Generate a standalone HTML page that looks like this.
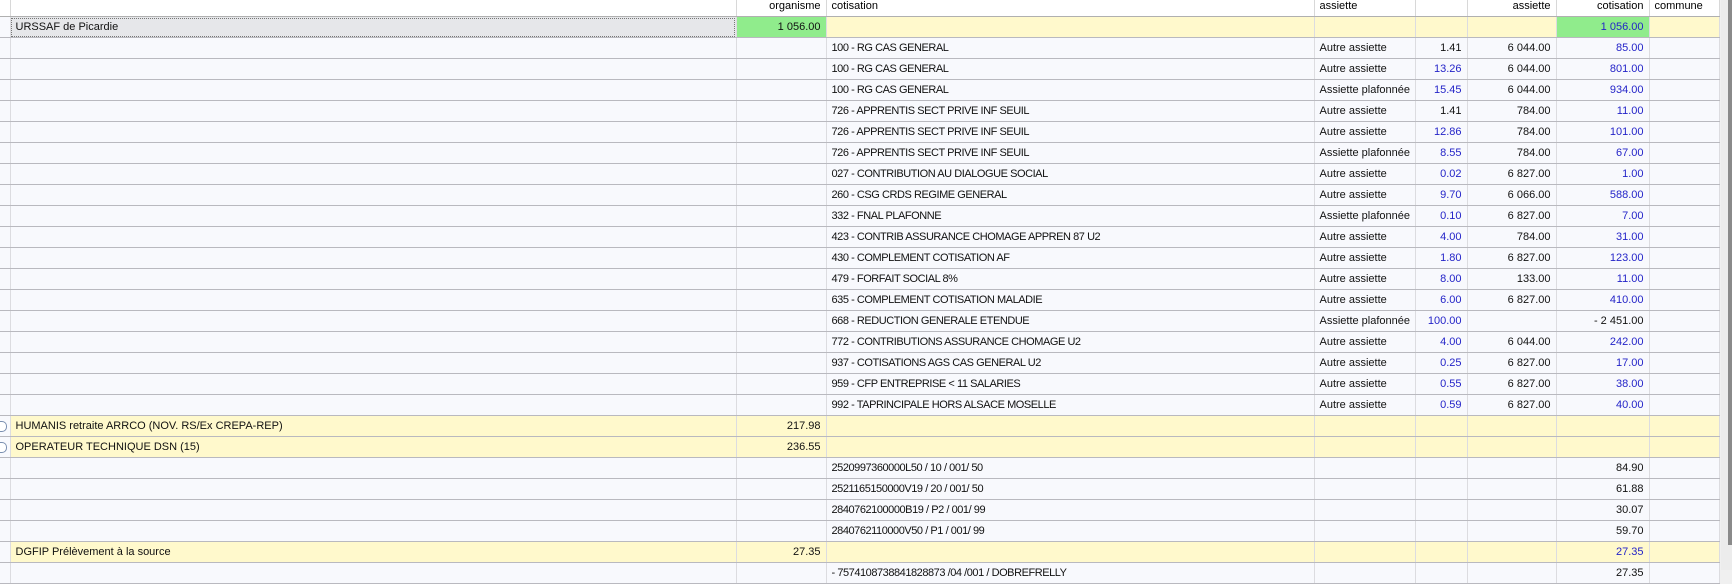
<!DOCTYPE html>
<html><head><meta charset="utf-8"><style>
body{margin:0;width:1732px;height:570px;overflow:hidden;background:#f0f0f0;font-family:"Liberation Sans",sans-serif;font-size:11px;color:#111;position:relative}
table{position:absolute;left:0;top:0;border-collapse:collapse;table-layout:fixed;width:1719px}
td{height:20px;padding:0 5px;border-bottom:1px solid #b9b9bf;border-right:1px solid #dcdce0;white-space:nowrap;overflow:hidden;background:#f8f9fd;line-height:20px;position:relative}
tr.h td{height:16px;line-height:13px;vertical-align:top;background:#fff;border-bottom:1px solid #b0b0b0;border-right:1px solid #d8d8d8;color:#000}
tr.y td{background:#fff9cc}
tr.y td.c0{background:#f8f9fd}
td.c0{padding:0}
td.k{letter-spacing:-0.45px}
.r{text-align:right}
.b{color:#2424c8}
td.g{background:#90ec8c!important}
td.u{background:#e6e7ea!important;outline:1px dotted #777;outline-offset:-2px}
.sb{position:absolute;left:1721px;top:0;width:11px;height:570px;background:#ececec}
.th{position:absolute;left:1728px;top:0;width:4px;height:545px;background:#8a8a8a}
.ic{position:absolute;left:0;top:5px;width:6px;height:9px;border:1px solid #7a8fb0;border-left:none;border-radius:0 5px 5px 0;background:#fff}
</style></head><body>
<table>
<colgroup><col style="width:10px"><col style="width:726px"><col style="width:90px"><col style="width:488px"><col style="width:101px"><col style="width:52px"><col style="width:89px"><col style="width:93px"><col style="width:70px"></colgroup>
<tr class="h"><td class="c0"></td><td></td><td class="r">organisme</td><td>cotisation</td><td>assiette</td><td></td><td class="r">assiette</td><td class="r">cotisation</td><td>commune</td></tr>
<tr class="y"><td class="c0"></td><td class="u">URSSAF de Picardie</td><td class="r g">1 056.00</td><td></td><td></td><td></td><td></td><td class="r g b">1 056.00</td><td></td></tr>
<tr><td class="c0"></td><td></td><td></td><td class="k">100 - RG CAS GENERAL</td><td>Autre assiette</td><td class="r">1.41</td><td class="r">6 044.00</td><td class="r b">85.00</td><td></td></tr>
<tr><td class="c0"></td><td></td><td></td><td class="k">100 - RG CAS GENERAL</td><td>Autre assiette</td><td class="r b">13.26</td><td class="r">6 044.00</td><td class="r b">801.00</td><td></td></tr>
<tr><td class="c0"></td><td></td><td></td><td class="k">100 - RG CAS GENERAL</td><td>Assiette plafonnée</td><td class="r b">15.45</td><td class="r">6 044.00</td><td class="r b">934.00</td><td></td></tr>
<tr><td class="c0"></td><td></td><td></td><td class="k">726 - APPRENTIS SECT PRIVE INF SEUIL</td><td>Autre assiette</td><td class="r">1.41</td><td class="r">784.00</td><td class="r b">11.00</td><td></td></tr>
<tr><td class="c0"></td><td></td><td></td><td class="k">726 - APPRENTIS SECT PRIVE INF SEUIL</td><td>Autre assiette</td><td class="r b">12.86</td><td class="r">784.00</td><td class="r b">101.00</td><td></td></tr>
<tr><td class="c0"></td><td></td><td></td><td class="k">726 - APPRENTIS SECT PRIVE INF SEUIL</td><td>Assiette plafonnée</td><td class="r b">8.55</td><td class="r">784.00</td><td class="r b">67.00</td><td></td></tr>
<tr><td class="c0"></td><td></td><td></td><td class="k">027 - CONTRIBUTION AU DIALOGUE SOCIAL</td><td>Autre assiette</td><td class="r b">0.02</td><td class="r">6 827.00</td><td class="r b">1.00</td><td></td></tr>
<tr><td class="c0"></td><td></td><td></td><td class="k">260 - CSG CRDS REGIME GENERAL</td><td>Autre assiette</td><td class="r b">9.70</td><td class="r">6 066.00</td><td class="r b">588.00</td><td></td></tr>
<tr><td class="c0"></td><td></td><td></td><td class="k">332 - FNAL PLAFONNE</td><td>Assiette plafonnée</td><td class="r b">0.10</td><td class="r">6 827.00</td><td class="r b">7.00</td><td></td></tr>
<tr><td class="c0"></td><td></td><td></td><td class="k">423 - CONTRIB ASSURANCE CHOMAGE APPREN 87 U2</td><td>Autre assiette</td><td class="r b">4.00</td><td class="r">784.00</td><td class="r b">31.00</td><td></td></tr>
<tr><td class="c0"></td><td></td><td></td><td class="k">430 - COMPLEMENT COTISATION AF</td><td>Autre assiette</td><td class="r b">1.80</td><td class="r">6 827.00</td><td class="r b">123.00</td><td></td></tr>
<tr><td class="c0"></td><td></td><td></td><td class="k">479 - FORFAIT SOCIAL 8%</td><td>Autre assiette</td><td class="r b">8.00</td><td class="r">133.00</td><td class="r b">11.00</td><td></td></tr>
<tr><td class="c0"></td><td></td><td></td><td class="k">635 - COMPLEMENT COTISATION MALADIE</td><td>Autre assiette</td><td class="r b">6.00</td><td class="r">6 827.00</td><td class="r b">410.00</td><td></td></tr>
<tr><td class="c0"></td><td></td><td></td><td class="k">668 - REDUCTION GENERALE ETENDUE</td><td>Assiette plafonnée</td><td class="r b">100.00</td><td class="r"></td><td class="r">- 2 451.00</td><td></td></tr>
<tr><td class="c0"></td><td></td><td></td><td class="k">772 - CONTRIBUTIONS ASSURANCE CHOMAGE U2</td><td>Autre assiette</td><td class="r b">4.00</td><td class="r">6 044.00</td><td class="r b">242.00</td><td></td></tr>
<tr><td class="c0"></td><td></td><td></td><td class="k">937 - COTISATIONS AGS CAS GENERAL U2</td><td>Autre assiette</td><td class="r b">0.25</td><td class="r">6 827.00</td><td class="r b">17.00</td><td></td></tr>
<tr><td class="c0"></td><td></td><td></td><td class="k">959 - CFP ENTREPRISE &lt; 11 SALARIES</td><td>Autre assiette</td><td class="r b">0.55</td><td class="r">6 827.00</td><td class="r b">38.00</td><td></td></tr>
<tr><td class="c0"></td><td></td><td></td><td class="k">992 - TAPRINCIPALE HORS ALSACE MOSELLE</td><td>Autre assiette</td><td class="r b">0.59</td><td class="r">6 827.00</td><td class="r b">40.00</td><td></td></tr>
<tr class="y"><td class="c0"><span class="ic"></span></td><td>HUMANIS retraite ARRCO (NOV. RS/Ex CREPA-REP)</td><td class="r">217.98</td><td></td><td></td><td></td><td></td><td></td><td></td></tr>
<tr class="y"><td class="c0"><span class="ic"></span></td><td>OPERATEUR TECHNIQUE DSN (15)</td><td class="r">236.55</td><td></td><td></td><td></td><td></td><td></td><td></td></tr>
<tr><td class="c0"></td><td></td><td></td><td class="k">2520997360000L50 / 10 / 001/ 50</td><td></td><td></td><td></td><td class="r">84.90</td><td></td></tr>
<tr><td class="c0"></td><td></td><td></td><td class="k">2521165150000V19 / 20 / 001/ 50</td><td></td><td></td><td></td><td class="r">61.88</td><td></td></tr>
<tr><td class="c0"></td><td></td><td></td><td class="k">2840762100000B19 / P2 / 001/ 99</td><td></td><td></td><td></td><td class="r">30.07</td><td></td></tr>
<tr><td class="c0"></td><td></td><td></td><td class="k">2840762110000V50 / P1 / 001/ 99</td><td></td><td></td><td></td><td class="r">59.70</td><td></td></tr>
<tr class="y"><td class="c0"></td><td>DGFIP Prélèvement à la source</td><td class="r">27.35</td><td></td><td></td><td></td><td></td><td class="r b">27.35</td><td></td></tr>
<tr><td class="c0"></td><td></td><td></td><td class="k">- 7574108738841828873 /04 /001 / DOBREFRELLY</td><td></td><td></td><td></td><td class="r">27.35</td><td></td></tr>
</table>
<div class="sb"></div><div class="th"></div>
</body></html>
